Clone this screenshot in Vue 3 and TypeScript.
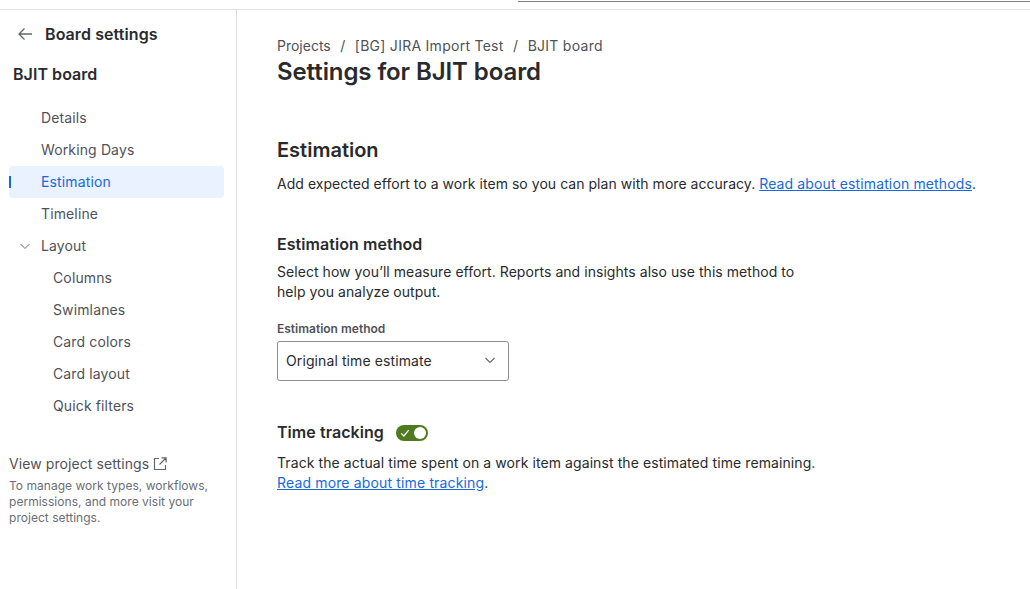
<template>
  <div class="page">
    <div class="top-strip"><span class="search-edge"></span></div>
    <div class="shell">
      <aside class="sidebar">
        <div class="back-row">
          <svg class="back-icon" width="16" height="16" viewBox="0 0 16 16" fill="none">
            <path d="M15 8H2M7.5 2.5 2 8l5.5 5.5" stroke="#63656b" stroke-width="1.3" />
          </svg>
          <span class="back-title">Board settings</span>
        </div>
        <div class="board-name">BJIT board</div>

        <nav class="nav">
          <div
            v-for="item in navItems"
            :key="item.label"
            class="nav-item"
            :class="{ active: item.active, child: item.child }"
          >
            <svg v-if="item.expandable" class="nav-chevron" width="12" height="12" viewBox="0 0 12 12" fill="none">
              <path d="M1.5 4 6 8.5 10.5 4" stroke="#6b6e76" stroke-width="1" />
            </svg>
            {{ item.label }}
          </div>
        </nav>

        <div class="project-link">
          <div class="project-link-title">
            View project settings
            <svg width="14" height="14" viewBox="0 0 14 14" fill="none">
              <path d="M6 1.5H1.5v11h11V8M8.5.9h4.6v4.6M13 1 6.5 7.5" stroke="#63656b" stroke-width="1.2" />
            </svg>
          </div>
          <p>To manage work types, workflows, permissions, and more visit your project settings.</p>
        </div>
      </aside>

      <main class="content">
        <div class="breadcrumbs">
          <span>Projects</span><i>/</i><span class="crumb-wide">[BG] JIRA Import Test</span><i>/</i><span class="crumb-wide">BJIT board</span>
        </div>
        <h1>Settings for BJIT board</h1>

        <h2>Estimation</h2>
        <p class="intro">
          Add expected effort to a work item so you can plan with more accuracy.
          <a href="#">Read about estimation methods</a>.
        </p>

        <h3>Estimation method</h3>
        <p class="method-text">
          Select how you’ll measure effort. Reports and insights also use this method to help you analyze output.
        </p>

        <label class="field-label">Estimation method</label>
        <div class="select-box">
          <span>{{ method }}</span>
          <svg width="12" height="12" viewBox="0 0 12 12" fill="none">
            <path d="M1.5 4 6 8.5 10.5 4" stroke="#63656b" stroke-width="1.1" />
          </svg>
        </div>

        <div class="tracking-head">
          <h3>Time tracking</h3>
          <span class="toggle">
            <svg width="10" height="10" viewBox="0 0 10 10" fill="none">
              <path d="M1.3 5.3 3.9 8 8.7 2.2" stroke="#fff" stroke-width="1.2" />
            </svg>
            <span class="knob"></span>
          </span>
        </div>
        <p class="tracking-text">
          Track the actual time spent on a work item against the estimated time remaining.<br />
          <a class="more-link" href="#">Read more about time tracking</a>.
        </p>
      </main>
    </div>
  </div>
</template>

<script setup lang="ts">
import { ref } from 'vue'

interface NavItem {
  label: string;
  active?: boolean;
  child?: boolean;
  expandable?: boolean;
}

const method = ref('Original time estimate')

const navItems: NavItem[] = [
  { label: 'Details' },
  { label: 'Working Days' },
  { label: 'Estimation', active: true },
  { label: 'Timeline' },
  { label: 'Layout', expandable: true },
  { label: 'Columns', child: true },
  { label: 'Swimlanes', child: true },
  { label: 'Card colors', child: true },
  { label: 'Card layout', child: true },
  { label: 'Quick filters', child: true },
]
</script>

<style>
html,
body {
  margin: 0;
  background: #fff;
  overflow: hidden;
}
</style>

<style scoped>
.page {
  width: 1030px;
  height: 589px;
  overflow: hidden;
  font-family: "Inter", "Noto Sans", sans-serif;
  color: #292a2e;
  font-size: 14px;
}

.top-strip {
  height: 9px;
  border-bottom: 1px solid #e0e0e0;
  display: flex;
  justify-content: flex-end;
}

.search-edge {
  width: 512px;
  height: 1px;
  margin-top: 1px;
  background: #808080;
  display: block;
}

.shell {
  display: flex;
  height: 579px;
}

/* sidebar */
.sidebar {
  width: 237px;
  border-right: 1px solid #e0e0e0;
  flex-shrink: 0;
  padding: 0 12px 0 9px;
  box-sizing: border-box;
}

.back-row {
  display: flex;
  align-items: center;
  gap: 12px;
  padding: 14px 0 0 8px;
  height: 20px;
  box-sizing: content-box;
}

.back-title {
  font-size: 16px;
  font-weight: 600;
  letter-spacing: 0.08px;
}

.board-name {
  font-size: 16px;
  font-weight: 600;
  margin: 20px 0 0 4px;
  line-height: 20px;
  letter-spacing: 0.05px;
}

.nav {
  margin-top: 18px;
  display: flex;
  flex-direction: column;
}

.nav-item {
  position: relative;
  height: 32px;
  line-height: 32px;
  padding-left: 32px;
  color: #505258;
  border-radius: 4px;
  letter-spacing: 0.13px;
}

.nav-item.child {
  padding-left: 44px;
}

.nav-item.active {
  background: #e9f2fe;
  color: #1868db;
}

.nav-item.active::before {
  content: "";
  position: absolute;
  left: 0;
  top: 10px;
  width: 2px;
  height: 12px;
  background: #1868db;
}

.nav-chevron {
  position: absolute;
  left: 10px;
  top: 10px;
}

.project-link {
  margin-top: 32px;
}

.project-link-title {
  display: flex;
  align-items: center;
  gap: 4px;
  color: #505258;
  line-height: 20px;
  letter-spacing: 0.08px;
}

.project-link p {
  margin: 4px 0 0;
  font-size: 12px;
  line-height: 16px;
  color: #6b6e76;
  width: 205px;
  letter-spacing: 0.03px;
}

/* content */
.content {
  padding: 26px 0 0 40px;
  flex: 1;
}

.breadcrumbs {
  display: flex;
  color: #505258;
  line-height: 20px;
}

.crumb-wide {
  letter-spacing: 0.27px;
}

.breadcrumbs i {
  font-style: normal;
  width: 24px;
  text-align: center;
}

h1 {
  font-size: 24px;
  line-height: 28px;
  font-weight: 600;
  margin: 2px 0 0;
  letter-spacing: -0.09px;
}

h2 {
  font-size: 20px;
  line-height: 24px;
  font-weight: 600;
  margin: 52px 0 0;
}

h3 {
  font-size: 16px;
  line-height: 20px;
  font-weight: 600;
  margin: 0;
  letter-spacing: 0.06px;
}

p {
  margin: 0;
}

.intro {
  margin-top: 12px;
  line-height: 20px;
  letter-spacing: 0.04px;
}

a {
  color: #1868db;
  text-decoration: underline;
}

.intro a {
  letter-spacing: 0.13px;
}

.more-link {
  letter-spacing: 0.15px;
}

.intro + h3 {
  margin-top: 40px;
}

.method-text {
  margin-top: 8px;
  line-height: 20px;
  width: 540px;
  letter-spacing: 0.05px;
}

.field-label {
  display: block;
  margin-top: 19px;
  font-size: 12px;
  line-height: 16px;
  font-weight: 600;
  color: #505258;
}

.select-box {
  margin-top: 4px;
  width: 232px;
  height: 40px;
  border: 1px solid #8c8f97;
  border-radius: 3px;
  box-sizing: border-box;
  display: flex;
  align-items: center;
  justify-content: space-between;
  padding: 0 12px 2px 8px;
  letter-spacing: 0.1px;
}

.tracking-head {
  display: flex;
  align-items: center;
  gap: 12px;
  margin-top: 41px;
}

.toggle {
  width: 32px;
  height: 16px;
  border-radius: 8px;
  background: #4f7a1f;
  display: flex;
  align-items: center;
  justify-content: space-between;
  padding: 0 2px 0 4px;
  box-sizing: border-box;
  margin-top: 2px;
}

.knob {
  width: 12px;
  height: 12px;
  border-radius: 50%;
  background: #fff;
}

.tracking-text {
  margin-top: 11px;
  line-height: 20px;
  letter-spacing: 0.085px;
}
</style>
